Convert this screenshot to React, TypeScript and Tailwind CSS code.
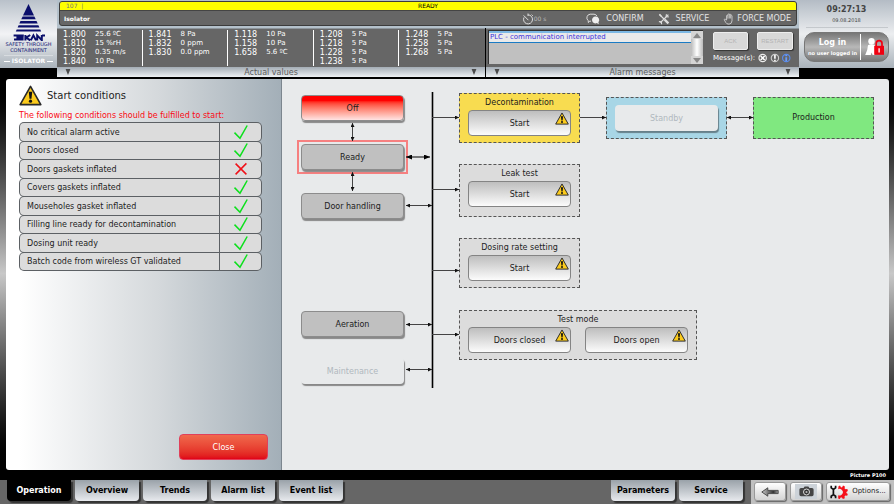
import type { ReactNode } from "react";
import clsx from "clsx";

const READINGS = [
  [
    ["1.800", "25.6 ºC"],
    ["1.810", "15 %rH"],
    ["1.820", "0.35 m/s"],
    ["1.840", "10 Pa"],
  ],
  [
    ["1.841", "8 Pa"],
    ["1.832", "0 ppm"],
    ["1.830", "0.0 ppm"],
  ],
  [
    ["1.118", "10 Pa"],
    ["1.158", "10 Pa"],
    ["1.658", "5.6 ºC"],
  ],
  [
    ["1.208", "5 Pa"],
    ["1.218", "5 Pa"],
    ["1.228", "5 Pa"],
    ["1.238", "5 Pa"],
  ],
  [
    ["1.248", "5 Pa"],
    ["1.258", "5 Pa"],
    ["1.268", "5 Pa"],
  ],
];

const CONDITIONS = [
  { label: "No critical alarm active", ok: true },
  { label: "Doors closed", ok: true },
  { label: "Doors gaskets inflated", ok: false },
  { label: "Covers gaskets inflated", ok: true },
  { label: "Mouseholes gasket inflated", ok: true },
  { label: "Filling line ready for decontamination", ok: true },
  { label: "Dosing unit ready", ok: true },
  { label: "Batch code from wireless GT validated", ok: true },
];

const TABS = ["Operation", "Overview", "Trends", "Alarm list", "Event list"];

/* ── Icons ──────────────────────────────── */

function WarningIcon({ className }: { className?: string }) {
  return (
    <svg viewBox="0 0 24 22" className={className} aria-hidden="true">
      <path
        d="M12 1.5 22.8 20.6H1.2Z"
        fill="#fccb1c"
        stroke="#2a2a2a"
        strokeWidth="1.7"
        strokeLinejoin="round"
      />
      <path d="M10.2 7h3.6l-.8 7.4h-2Z" fill="#111" />
      <circle cx="12" cy="17" r="1.7" fill="#111" />
    </svg>
  );
}

function CheckIcon() {
  return (
    <svg viewBox="0 0 16 16" className="mx-auto h-4 w-4" role="img" aria-label="fulfilled">
      <path d="M1.5 8.6 7 14.2 14.2 1.5" fill="none" stroke="#0ce01c" strokeWidth="1.5" />
    </svg>
  );
}

function CrossIcon() {
  return (
    <svg viewBox="0 0 16 16" className="mx-auto h-4 w-4" role="img" aria-label="not fulfilled">
      <path d="M2.6 2.600 13.400 13.400M13.400 2.400 2.600 13.400" fill="none" stroke="#f01018" strokeWidth="1.5" />
    </svg>
  );
}

function SkanLogo() {
  return (
    <svg viewBox="0 0 34 37" className="h-[37px] w-[34px] shrink-0" aria-hidden="true">
      <g fill="#0b0f6b">
        <path d="M16.500 0 22 11.400H11Z" />
        <path d="M10.600 12.500h11.800l1.300 2.800H9.300Z" />
        <path d="M8.500 17h16l1.200 2.500H7.300Z" />
        <path d="M6.600 21.300h19.800l1 2.200H5.600Z" />
        <path d="M4.700 25.600h23.600l.9 1.800H3.800Z" />
      </g>
      <path
        d="M1.600 31.600h10.200M4.400 33.400h6.200v2.200H2M13.400 31v5.400M18.200 31l-4 2.600 4 2.800M18.800 36.400 21.400 31.400l2.600 5M25.200 36.400V31.400l4.600 4.800V31M30 31.400h3"
        fill="none"
        stroke="#0b0f6b"
        strokeWidth="2"
      />
    </svg>
  );
}

function StopwatchIcon() {
  return (
    <svg viewBox="0 0 12 12" className="h-3 w-3" aria-hidden="true">
      <g fill="none" stroke="#ddd" strokeWidth="1">
        <path d="M6 1.9A4.5 4.5 0 1 1 2 4.4M6 0.5V3M1.6 2.4 6.4 7.2M9.6 1.6 10.8 2.8" />
      </g>
    </svg>
  );
}

function SpeechIcon() {
  return (
    <svg viewBox="0 0 14 12" className="h-3 w-3.5" aria-hidden="true">
      <path d="M5 8.2H3.6L2.4 9.6 2.2 7.6A3.6 3.6 0 0 1 4.2 1.2H8a3.4 3.4 0 0 1 3 2" fill="none" stroke="#ddd" />
      <path d="M9.6 3.6a3.4 3.4 0 0 1 2.8 5.6l.4 2-2-1.1A3.4 3.4 0 1 1 9.6 3.6Z" fill="#eee" />
    </svg>
  );
}

function ToolsIcon() {
  return (
    <svg viewBox="0 0 12 12" className="h-3 w-3" aria-hidden="true">
      <path d="M1.6 1.6 6 6M10.4 1.6 2.4 9.6" stroke="#ddd" strokeWidth="1.3" />
      <path d="M6.4 6.4 10.4 10.4" stroke="#ddd" strokeWidth="2.2" />
      <path d="M8.4 1.2 8.2 3.6 10.8 3.8M.9 8.6l2.4.2.3 2.4" fill="none" stroke="#ddd" strokeWidth="1.2" />
      <path d="M.8 1.8 2 .8l1.8 2L2.6 3.8Z" fill="#ddd" />
    </svg>
  );
}

function HandIcon() {
  return (
    <svg viewBox="0 0 12 12" className="h-3 w-3" aria-hidden="true">
      <path
        d="M3.6 7V2.6q.7-.9 1.3 0V1.5q.7-.9 1.4 0v-.2q.7-.8 1.4.2v1q.8-.7 1.3.2v5.1q-.2 3.2-3 3.4-2.4 0-3.3-1.8L1.2 6.6q.6-1 1.4-.2ZM4.9 2.6v3M6.3 1.5v4M7.700 2.500v3"
        fill="none"
        stroke="#ddd"
        strokeWidth=".8"
      />
    </svg>
  );
}

function LockedUserIcon() {
  return (
    <svg viewBox="0 0 20 20" className="h-5 w-5" aria-hidden="true">
      <circle cx="6.500" cy="4.200" r="3.200" fill="#fff" />
      <path d="M3 8.200Q6.500 6.400 10 8.200V18H7.600l-1-2.400-.8 2.400H.2Q2.800 13 3 8.200Z" fill="#fff" />
      <path d="M11.200 9.400V6.600a2.900 2.900 0 0 1 5.800 0V9.400" fill="none" stroke="#f00010" strokeWidth="1.700" />
      <path d="M9.200 8.800h9.800v9H9.200Z" fill="#f00010" />
      <path d="M14.100 11.200v4.200" stroke="#fff" strokeWidth="1.300" />
    </svg>
  );
}

function Triangle() {
  return (
    <svg viewBox="0 0 6 6" className="h-1.5 w-1.5" aria-hidden="true">
      <path d="M.6 0h4.8L3 6Z" fill="#4a4a4a" />
    </svg>
  );
}

/* ── Header ─────────────────────────────── */

function CaptionBar({ children }: { children: ReactNode }) {
  return (
    <div className="flex h-2.5 items-center justify-between bg-linear-to-b from-[#a4adb5] to-[#eef1f4] px-2 text-[8px] leading-[10px] text-[#5c5c5c]">
      <button type="button" aria-label="Expand left">
        <Triangle />
      </button>
      <span className="pt-px">{children}</span>
      <button type="button" aria-label="Expand right">
        <Triangle />
      </button>
    </div>
  );
}

function StatusStrip() {
  return (
    <div className="h-7 bg-[#b4c1cb] px-0.5 pt-px">
      <div className="overflow-hidden rounded-[3px] border border-[#3c3c3c] bg-[#666]">
        <div className="relative flex h-2 items-center bg-[#ffff00] text-[6px] leading-[8px]">
          <span className="pl-1.5 text-[#777]">107&nbsp;&nbsp;|</span>
          <span className="absolute inset-x-0 text-center text-black">READY</span>
        </div>
        <div className="flex h-[15px] items-center border-t border-[#444] pt-px pl-1 text-[8px] text-[#e4e4e4]">
          <span className="text-[6px] font-bold text-white">Isolator</span>
          <div className="ml-auto flex items-center pr-[5px]">
            <span className="mr-10 flex items-center text-[6px] text-[#bbb]">
              <StopwatchIcon />
              00 s
            </span>
            <span className="mr-3.5 flex items-center gap-1.5">
              <SpeechIcon />
              CONFIRM
            </span>
            <span className="mr-3.5 flex items-center gap-1.5">
              <ToolsIcon />
              SERVICE
            </span>
            <span className="flex items-center gap-0.5">
              <HandIcon />
              FORCE MODE
            </span>
          </div>
        </div>
      </div>
    </div>
  );
}

function ActualValues() {
  return (
    <section className="min-w-0 flex-[428]">
      <div className="grid h-[39px] grid-cols-5 border-t border-[#8d959b] bg-[#666] pt-px text-white">
        {READINGS.map((column, i) => (
          <dl
            key={i}
            className={clsx(
              "mb-0.5 pl-[6px]",
              i < READINGS.length - 1 && "border-r border-white",
            )}
          >
            {column.map(([tag, value]) => (
              <div key={tag} className="flex h-[9px] items-center leading-[9px]">
                <dt className="w-8 text-[8px]">{tag}</dt>
                <dd className="text-[7px] whitespace-nowrap">{value}</dd>
              </div>
            ))}
          </dl>
        ))}
      </div>
      <CaptionBar>Actual values</CaptionBar>
    </section>
  );
}

function AlarmMessages() {
  return (
    <section className="min-w-0 flex-[313] border-l border-black">
      <div className="flex h-[39px] border-t border-[#8d959b] bg-[#666] pt-px pr-1.5 pl-0.5">
        <div className="flex h-[34px] flex-1 border-t border-l border-[#333] bg-[#c0c0c0]">
          <div className="flex-1">
            <p className="h-3 border-t-2 border-b border-[#1a7bc4] border-t-[#7db8e4] bg-[#eaeaea] pl-px text-[7px] leading-[9px] whitespace-nowrap text-[#3c32dc]">
              PLC - communication interrupted
            </p>
          </div>
          <div className="flex w-3 flex-col bg-linear-to-r from-[#bbb] via-white to-[#bbb]">
            <button type="button" aria-label="Scroll up" className="flex h-2 items-center justify-center bg-[#d4d4d4]">
              <svg viewBox="0 0 8 5" className="h-[5px] w-2" aria-hidden="true">
                <path d="M0 5 4 0l4 5Z" fill="#888" />
              </svg>
            </button>
            <button type="button" aria-label="Scroll down" className="mt-auto flex h-2 items-center justify-center bg-[#d4d4d4]">
              <svg viewBox="0 0 8 5" className="h-[5px] w-2" aria-hidden="true">
                <path d="M0 0 4 5 8 0Z" fill="#888" />
              </svg>
            </button>
          </div>
        </div>
        <div className="ml-2.5 w-20 pt-0.5">
          <div className="flex justify-between font-['Liberation_Sans',sans-serif] text-[6px] text-[#b4b4b4]">
            <button type="button" className="h-[18px] w-[35px] rounded-[2px] border border-[#eee] bg-[#d8d8d8] shadow-[1px_1px_1px_#333]">
              ACK
            </button>
            <button type="button" className="h-[18px] w-9 rounded-[2px] border border-[#eee] bg-[#d8d8d8] shadow-[1px_1px_1px_#333]">
              RESTART
            </button>
          </div>
          <div className="mt-0.5 flex items-center text-[7px] leading-[12px] text-white">
            Message(s):
            <svg viewBox="0 0 38 12" className="ml-0.5 h-3 w-[38px]" aria-hidden="true">
              <g fill="none" strokeWidth="1.2">
                <circle cx="6" cy="6" r="3.9" stroke="#eee" />
                <path d="M3.9 3.9 8.1 8.1M8.1 3.9 3.9 8.1" stroke="#fff" strokeWidth="1.7" />
                <circle cx="19" cy="6" r="3.9" stroke="#ccc" />
                <path d="M19 2.8v3.9M19 7.8v1.4" stroke="#fff" strokeWidth="1.7" />
                <circle cx="31" cy="6" r="3.9" stroke="#5a8cec" />
                <path d="M31 5.3v3.9M31 2.8v1.4" stroke="#6a9cfc" strokeWidth="1.9" />
              </g>
            </svg>
          </div>
        </div>
      </div>
      <CaptionBar>Alarm messages</CaptionBar>
    </section>
  );
}

function Header() {
  return (
    <header className="flex items-start bg-black">
      {/* ── Brand ──────────────────────────────── */}
      <div className="flex h-[68px] w-[57px] flex-col items-center bg-linear-to-b from-[#b9c1ca] via-[#f2f3f5] to-[#a9b2ba] pt-1 text-center">
        <SkanLogo />
        <p className="text-[5px] leading-[6px] font-medium whitespace-nowrap text-[#141874]">
          SAFETY THROUGH
          <br />
          CONTAINMENT
        </p>
        <p className="mt-0.5 flex items-center gap-0.5 border-t border-[#d8dce0] pt-px text-[6px] leading-[8px] font-bold text-white">
          <span className="w-1.5 border-t border-white" />
          ISOLATOR
          <span className="w-1.5 border-t border-white" />
        </p>
      </div>

      <div className="min-w-0 flex-1">
        <StatusStrip />
        <div className="flex">
          <ActualValues />
          <AlarmMessages />
        </div>
      </div>

      {/* ── Clock and login ────────────────────── */}
      <div className="flex h-[68px] w-[95px] flex-col items-center bg-linear-to-b from-[#b4bcc5] via-[#eceef0] to-[#a9b2ba] text-[#444]">
        <time className="mt-1 text-[8px] leading-[11px] font-bold">09:27:13</time>
        <time className="text-[5px] leading-[10px]">09.08.2018</time>
        <div className="mt-0.5 h-px w-[82px] bg-[#c4c8cc]" />
        <button
          type="button"
          className="mt-1 flex h-[30px] w-[85px] items-center rounded-[10px] border border-[#777] bg-linear-to-b from-[#777] via-[#b8b8b8] to-[#777] text-white"
        >
          <span className="w-[55px] pt-0.5 text-center font-bold whitespace-nowrap">
            <span className="block text-[8px] leading-[10px]">Log in</span>
            <span className="block text-[5px] leading-[10px]">no user logged in</span>
          </span>
          <span className="flex h-[26px] items-center border-l border-white pl-1">
            <LockedUserIcon />
          </span>
        </button>
      </div>
    </header>
  );
}

/* ── Start conditions ───────────────────── */

function StartConditions() {
  return (
    <aside className="flex w-[276px] shrink-0 flex-col border-r border-[#7c868e] bg-linear-to-r from-white from-5% via-[#d5d9dc] via-55% to-[#a3afb8] px-[13px] pt-[5px] pb-2.5">
      <h1 className="flex items-center gap-[5px] text-[10px] leading-[22px]">
        <WarningIcon className="h-[21px] w-[23px]" />
        <span className="pt-px">Start conditions</span>
      </h1>
      <p className="mt-[3px] text-[8px] leading-[12px] whitespace-nowrap text-[#fa0a14]">
        The following conditions should be fulfilled to start:
      </p>
      <table className="h-[149px] w-[243px] border-separate border-spacing-px text-[8px] leading-[10px]">
        <tbody>
          {CONDITIONS.map(({ label, ok }) => (
            <tr key={label}>
              <th
                scope="row"
                className="rounded-l-[4px] bg-[#dcdcdc] pt-0.5 pl-[7px] text-left font-normal shadow-[0_0_0_1px_#5c6064]"
              >
                {label}
              </th>
              <td className="w-[41px] rounded-r-[4px] bg-[#dcdcdc] p-0 shadow-[0_0_0_1px_#5c6064]">
                {ok ? <CheckIcon /> : <CrossIcon />}
              </td>
            </tr>
          ))}
        </tbody>
      </table>
      <button
        type="button"
        className="mt-auto h-[26px] w-[89px] self-end rounded-[4px] border border-[#e0405a] bg-linear-to-b from-[#f0684c] to-[#e00018] pt-px text-[8px] text-white"
      >
        Close
      </button>
    </aside>
  );
}

/* ── Process diagram ────────────────────── */

const STATES = [
  { label: "Off", place: "top-4", look: "border-[#8c8c8c] bg-linear-to-b from-[#ff0000] from-20% to-[#ffe4e4]" },
  { label: "Ready", place: "top-[65px]", look: "border-[#8c8c8c] bg-[#c0c0c0]" },
  { label: "Door handling", place: "top-[114px]", look: "border-[#8c8c8c] bg-[#c0c0c0]" },
  { label: "Aeration", place: "top-[232px]", look: "border-[#8c8c8c] bg-[#c0c0c0]" },
  { label: "Maintenance", place: "top-[279px]", look: "border-transparent bg-[#e8eaeb] text-[#b0b8be]" },
];

function StartButton({ children }: { children: ReactNode }) {
  return (
    <button
      type="button"
      className="relative h-[26px] w-[103px] rounded-[4px] border border-[#848484] bg-linear-to-b from-[#bebebe] to-[#fcfcfc] pt-px"
    >
      {children}
      <WarningIcon className="absolute top-px right-px h-[13px] w-3.5" />
    </button>
  );
}

function Group({ title, className, children }: { title: string; className: string; children: ReactNode }) {
  return (
    <section className={clsx("absolute border border-dashed border-[#555] px-2", className)}>
      <h2 className="pt-px text-center leading-[15px]">{title}</h2>
      <div className="flex justify-between">{children}</div>
    </section>
  );
}

function Connectors() {
  return (
    <svg viewBox="0 0 607 391" className="absolute top-0 left-0 h-[391px] w-[607px]" aria-hidden="true">
      <defs>
        <marker id="head" viewBox="0 0 4 4" refX="4" refY="2" markerWidth="4" markerHeight="4" markerUnits="userSpaceOnUse" orient="auto-start-reverse">
          <path d="M0 0 4 2 0 4Z" fill="#111" />
        </marker>
        <marker id="head-lg" viewBox="0 0 6 5" refX="6" refY="2.5" markerWidth="6" markerHeight="5" markerUnits="userSpaceOnUse" orient="auto-start-reverse">
          <path d="M0 0 6 2.5 0 5Z" fill="#000" />
        </marker>
      </defs>
      <path d="M150.5 13V309" stroke="#000" strokeWidth="1.6" />
      <g stroke="#444" strokeWidth="1" markerEnd="url(#head)">
        <path d="M150 38.5h27" />
        <path d="M150 110.5h27" />
        <path d="M150 191.5h27" />
        <path d="M150 255.5h27" />
        <path d="M298 38.5h26" />
      </g>
      <g stroke="#444" strokeWidth="1" markerStart="url(#head)" markerEnd="url(#head)">
        <path d="M445 38.5h26" />
        <path d="M70.5 44v18" />
        <path d="M70.5 93v19" />
        <path d="M124 126.5h26" />
        <path d="M124 245.5h26" />
        <path d="M124 290.5h26" />
      </g>
      <path d="M124 78h24" stroke="#000" strokeWidth="1.2" markerStart="url(#head-lg)" markerEnd="url(#head-lg)" />
    </svg>
  );
}

function ProcessDiagram() {
  return (
    <section className="relative min-h-[391px] flex-1 bg-[#e8eaeb] text-[8px] leading-[10px]">
      <div className="absolute top-[61px] left-[15px] h-[34px] w-[111px] border-2 border-[#f68080]" />
      <Connectors />

      {STATES.map(({ label, place, look }) => (
        <button
          key={label}
          type="button"
          disabled={label === "Maintenance"}
          className={clsx(
            "absolute left-[19px] h-[26px] w-[103px] rounded-[4px] border pt-px shadow-[1px_2px_1px_#888]",
            place,
            look,
          )}
        >
          {label}
        </button>
      ))}

      <Group title="Decontamination" className="top-3.5 left-[177px] h-[50px] w-[121px] bg-[#f8dc50]">
        <StartButton>Start</StartButton>
      </Group>
      <Group title="Leak test" className="top-[85px] left-[177px] h-[53px] w-[121px] bg-[#dcdcdc]">
        <StartButton>Start</StartButton>
      </Group>
      <Group title="Dosing rate setting" className="top-[159px] left-[177px] h-[50px] w-[121px] bg-[#dcdcdc]">
        <StartButton>Start</StartButton>
      </Group>
      <Group title="Test mode" className="top-[231px] left-[177px] h-[50px] w-[238px] bg-[#dcdcdc]">
        <StartButton>Doors closed</StartButton>
        <StartButton>Doors open</StartButton>
      </Group>

      <div className="absolute top-[18px] left-[324px] flex h-[42px] w-[121px] items-center justify-center border border-dashed border-[#555] bg-[#a8d6e6]">
        <button
          type="button"
          disabled
          className="h-[26px] w-[103px] rounded-[4px] bg-[#e8eaeb] pt-px text-[#b0b8be] shadow-[1px_2px_1px_#66808a]"
        >
          Standby
        </button>
      </div>
      <div className="absolute top-[18px] left-[471px] flex h-[42px] w-[121px] items-center justify-center border border-dashed border-[#555] bg-[#80e880]">
        Production
      </div>
    </section>
  );
}

/* ── Footer ─────────────────────────────── */

function Tab({ label, active }: { label: string; active?: boolean }) {
  return (
    <button
      type="button"
      className={clsx(
        "h-[21px] w-16 rounded-b-[4px] text-[8px] font-bold shadow-[2px_2px_1px_#333]",
        active ? "bg-black text-white" : "bg-linear-to-b from-[#9aa2a9] to-[#e8eaee] text-black",
      )}
    >
      {label}
    </button>
  );
}

function ToolButton({ label, className, children }: { label: string; className: string; children: ReactNode }) {
  return (
    <button
      type="button"
      aria-label={label}
      className={clsx(
        "flex h-[19px] items-center justify-center rounded-[3px] border border-[#999] bg-linear-to-b from-white to-[#d4d4d4] text-[7px] shadow-[1px_1px_1px_#666]",
        className,
      )}
    >
      {children}
    </button>
  );
}

function Footer() {
  return (
    <footer className="flex h-6 bg-[#666]">
      <nav className="flex flex-1 gap-1 pl-[7px]">
        {TABS.map((label) => (
          <Tab key={label} label={label} active={label === "Operation"} />
        ))}
        <div className="mr-2 ml-auto flex gap-1">
          <Tab label="Parameters" />
          <Tab label="Service" />
        </div>
      </nav>
      <div className="flex items-start gap-1 bg-[#c0c0c0] pt-0.5 pr-1 pl-[3px]">
        <ToolButton label="Back" className="w-8">
          <svg viewBox="0 0 18 10" className="h-2.5 w-[18px]" aria-hidden="true">
            <defs>
              <linearGradient id="back">
                <stop offset="0" stopColor="#ccc" />
                <stop offset="0.7" stopColor="#333" />
                <stop offset="1" stopColor="#999" />
              </linearGradient>
            </defs>
            <path d="M.8 5 6.8.8V3.4H17.2V6.6H6.8V9.2Z" fill="url(#back)" stroke="#444" strokeWidth=".9" />
          </svg>
        </ToolButton>
        <ToolButton label="Screenshot" className="w-8">
          <span className="flex h-[15px] w-[22px] items-center justify-center bg-[#ccd2d8]">
            <svg viewBox="0 0 15 11" className="h-[11px] w-[15px]" aria-hidden="true">
              <path d="M2 2h2.6L5.6.6h3.8L10.4 2H13q1.6 0 1.6 1.6v5q0 1.6-1.6 1.6H2Q.4 10.2.4 8.6V3.6Q.4 2 2 2Z" fill="#444" />
              <circle cx="7.5" cy="6" r="3" fill="#333" stroke="#ddd" />
              <circle cx="7.5" cy="6" r="1.1" fill="#bbb" />
            </svg>
          </span>
        </ToolButton>
        <ToolButton label="Options..." className="w-16 gap-1">
          <svg viewBox="0 0 18 14" className="h-3.5 w-[18px]" aria-hidden="true">
            <path d="M1.2.8v2L3.4 4.4 5.600 2.800v-2M3.400 4v6M1.200 13.200v-2L3.400 9.600l2.200 1.600v2" fill="none" stroke="#111" strokeWidth="1.7" />
            <path
              d="M8.5 1.2 10 .6l1 1.8 1.200-.2L13 .6l1.9.9-.3 1.9 1 .9 1.8-.3.4 1.9-1.400 1 0 1.100 1.400 1-.6 1.800-1.800-.2-.9 1 .3 1.700-1.900.7-1-1.500h-1.300l-.9 1.600-1.500-.5V10.200A3.300 3.300 0 1 0 8.200 4.200Z"
              fill="#f5101a"
            />
            <circle cx="11" cy="7" r="1.6" fill="#eee" />
          </svg>
          Options...
        </ToolButton>
      </div>
    </footer>
  );
}

export default function App() {
  return (
    <div className="flex min-h-screen flex-col bg-black font-['DejaVu_Sans',Verdana,sans-serif] text-[#1c1c1c]">
      <Header />
      <div className="flex flex-1 flex-col bg-linear-to-b from-black via-[#c8c8c8] to-black pr-[5px] pl-1.5">
        <div className="-mr-[5px] -ml-1.5 h-0.5 bg-black" />
        <main className="flex flex-1 overflow-hidden rounded-[3px]">
          <StartConditions />
          <ProcessDiagram />
        </main>
      </div>
      <p className="h-2.5 bg-black pr-2 text-right text-[5px] leading-[10px] font-bold text-white">
        Picture P100
      </p>
      <Footer />
    </div>
  );
}
